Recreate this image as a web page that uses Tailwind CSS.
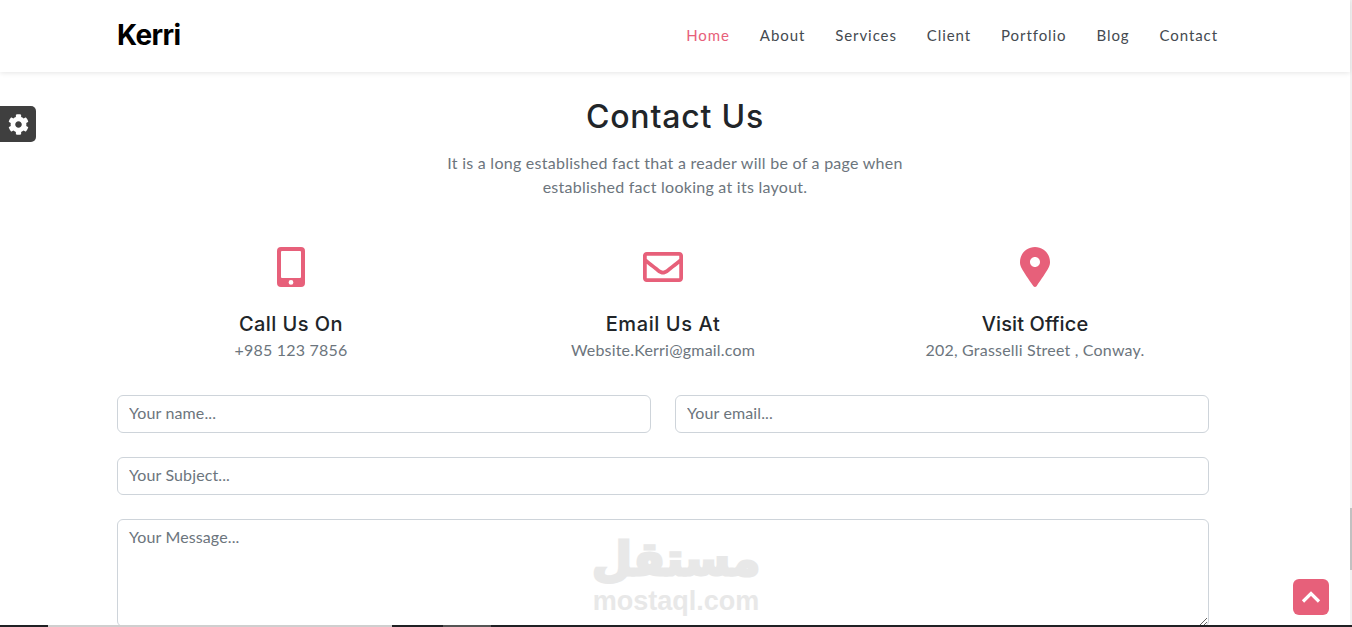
<!DOCTYPE html>
<html lang="en">
<head>
  <meta charset="UTF-8" />
  <title>Kerri - Contact</title>
  <script src="https://cdn.jsdelivr.net/npm/@tailwindcss/browser@4"></script>
</head>
<body class="relative h-[627px] w-[1352px] overflow-hidden bg-white font-['Lato',sans-serif]">

  <!-- navbar -->
  <header class="relative z-10 flex h-[72px] w-[1350px] items-center justify-between bg-white pl-[117px] pr-[132px] shadow-[0_1px_5px_rgba(0,0,0,0.1)]">
    <a class="mb-[2px] font-['Inter',sans-serif] text-[28px] font-bold leading-none tracking-[-0.6px] text-black">Kerri</a>
    <nav class="mb-[1px] flex gap-[30px] text-[15px] leading-none tracking-[0.92px] text-[#444a50]">
      <a class="text-[#e7607a]">Home</a>
      <a>About</a>
      <a>Services</a>
      <a>Client</a>
      <a>Portfolio</a>
      <a>Blog</a>
      <a>Contact</a>
    </nav>
  </header>

  <main class="w-[1350px]">
    <div class="pt-[25px] text-center">
      <h1 class="font-['Inter',sans-serif] text-[32px] font-medium leading-[40px] tracking-[0.8px] text-[#212529]">Contact Us</h1>
      <p class="mt-[14px] text-[16px] leading-[24px] tracking-[0.26px] text-[#6c757d]">It is a long established fact that a reader will be of a page when<br />established fact looking at its layout.</p>
    </div>

    <!-- contact details -->
    <div class="ml-[117px] mt-[48px] grid w-[1092px] grid-cols-3 gap-x-[24px] text-center">
      <div class="flex flex-col items-center">
        <svg class="h-[40px] w-[28px] fill-[#e7607a]" viewBox="0 0 28 40"><path fill-rule="evenodd" d="M4 0h20a4 4 0 0 1 4 4v32a4 4 0 0 1-4 4H4a4 4 0 0 1-4-4V4a4 4 0 0 1 4-4zm1 4a1 1 0 0 0-1 1v25a1 1 0 0 0 1 1h18a1 1 0 0 0 1-1V5a1 1 0 0 0-1-1zm9 29a2.4 2.4 0 1 0 0 4.8 2.4 2.4 0 0 0 0-4.8z"/></svg>
        <h3 class="mt-[24px] font-['Inter',sans-serif] text-[20px] font-medium leading-[26px] tracking-[0.45px] text-[#212529]">Call Us On</h3>
        <p class="mt-[1px] text-[16px] leading-[24px] tracking-[0.2px] text-[#6c757d]">+985 123 7856</p>
      </div>
      <div class="flex flex-col items-center">
        <svg class="h-[40px] w-[40px] fill-[#e7607a]" viewBox="0 0 512 512"><path d="M464 64H48C21.49 64 0 85.49 0 112v288c0 26.51 21.49 48 48 48h416c26.51 0 48-21.49 48-48V112c0-26.51-21.49-48-48-48zm0 48v40.805c-22.422 18.259-58.168 46.651-134.587 106.49-16.841 13.247-50.201 45.072-73.413 44.701-23.208.375-56.579-31.459-73.413-44.701C106.18 199.465 70.425 171.067 48 152.805V112h416zM48 400V214.398c22.914 18.251 55.409 43.862 104.938 82.646 21.857 17.205 60.134 55.186 103.062 54.955 42.717.231 80.509-37.199 103.053-54.947 49.528-38.783 82.032-64.401 104.947-82.653V400H48z"/></svg>
        <h3 class="mt-[24px] font-['Inter',sans-serif] text-[20px] font-medium leading-[26px] tracking-[0.6px] text-[#212529]">Email Us At</h3>
        <p class="mt-[1px] text-[16px] leading-[24px] tracking-[0.2px] text-[#6c757d]">Website.Kerri@gmail.com</p>
      </div>
      <div class="flex flex-col items-center">
        <svg class="h-[40px] w-[30px] fill-[#e7607a]" viewBox="0 0 384 512"><path fill-rule="evenodd" d="M172.268 501.67C26.97 291.031 0 255.327 0 192 0 85.961 85.961 0 192 0s192 85.961 192 192c0 63.327-26.97 99.031-172.268 309.67-9.535 13.774-29.93 13.773-39.464 0zM192 256c35.3 0 64-28.7 64-64s-28.7-64-64-64-64 28.7-64 64 28.7 64 64 64z"/></svg>
        <h3 class="mt-[24px] font-['Inter',sans-serif] text-[20px] font-medium leading-[26px] tracking-[0.1px] text-[#212529]">Visit Office</h3>
        <p class="mt-[1px] text-[16px] leading-[24px] tracking-[0.2px] text-[#6c757d]">202, Grasselli Street , Conway.</p>
      </div>
    </div>

    <!-- form -->
    <form class="ml-[117px] mt-[33px] grid w-[1092px] grid-cols-2 gap-[24px] text-[16px]">
      <input type="text" placeholder="Your name..." class="h-[38px] rounded-[6px] border border-[#ced4da] bg-white pb-[4px] pl-[11px] pr-[12px] tracking-[0.12px] text-[#212529] placeholder:text-[#6c757d]" />
      <input type="text" placeholder="Your email..." class="h-[38px] rounded-[6px] border border-[#ced4da] bg-white pb-[4px] pl-[11px] pr-[12px] tracking-[0.12px] text-[#212529] placeholder:text-[#6c757d]" />
      <input type="text" placeholder="Your Subject..." class="col-span-2 h-[38px] rounded-[6px] border border-[#ced4da] bg-white pb-[4px] pl-[11px] pr-[12px] tracking-[0.12px] text-[#212529] placeholder:text-[#6c757d]" />
      <textarea placeholder="Your Message..." class="col-span-2 h-[108px] rounded-[6px] border border-[#ced4da] bg-white py-[5px] pl-[11px] pr-[12px] leading-[24px] tracking-[0.12px] text-[#212529] placeholder:text-[#6c757d]"></textarea>
    </form>
  </main>

  <!-- settings tab -->
  <button class="absolute left-0 top-[106px] flex h-[36px] w-[36px] items-center justify-center rounded-r-[5px] bg-[#3f3f3f]">
    <svg class="h-[21px] w-[21px] fill-white" viewBox="0 0 512 512"><path d="M487.4 315.7l-42.6-24.6c4.3-23.2 4.3-47 0-70.2l42.6-24.6c4.9-2.8 7.1-8.6 5.5-14-11.1-35.6-30-67.8-54.7-94.6-3.8-4.1-10-5.1-14.8-2.3L380.8 110c-17.9-15.4-38.5-27.3-60.8-35.1V25.8c0-5.6-3.9-10.5-9.4-11.7-36.7-8.2-74.3-7.8-109.2 0-5.5 1.2-9.4 6.1-9.4 11.7V75c-22.2 7.9-42.8 19.8-60.8 35.1L88.7 85.5c-4.9-2.8-11-1.9-14.8 2.3-24.7 26.7-43.6 58.9-54.7 94.6-1.7 5.4.6 11.2 5.5 14L67.3 221c-4.3 23.2-4.3 47 0 70.2l-42.6 24.6c-4.9 2.8-7.1 8.6-5.5 14 11.1 35.6 30 67.8 54.7 94.6 3.8 4.1 10 5.1 14.8 2.3l42.6-24.6c17.9 15.4 38.5 27.3 60.8 35.1v49.2c0 5.6 3.9 10.5 9.4 11.7 36.7 8.2 74.3 7.8 109.2 0 5.5-1.2 9.4-6.1 9.4-11.7v-49.2c22.2-7.9 42.8-19.8 60.8-35.1l42.6 24.6c4.9 2.8 11 1.9 14.8-2.3 24.7-26.7 43.6-58.9 54.7-94.6 1.5-5.5-.7-11.3-5.6-14.1zM256 336c-44.1 0-80-35.9-80-80s35.9-80 80-80 80 35.9 80 80-35.9 80-80 80z"/></svg>
  </button>

  <!-- watermark -->
  <div class="pointer-events-none absolute left-[576px] top-[531px] flex w-[200px] flex-col items-center">
    <span dir="rtl" class="font-['DejaVu_Sans',sans-serif] text-[46px] font-bold leading-[56px] text-[#e8e8e8] [-webkit-text-stroke:3px_#e8e8e8]">مستقل</span>
    <span class="mt-[1px] font-['Liberation_Sans',sans-serif] text-[27px] font-bold leading-[26px] text-[#e8e8e8]">mostaql.com</span>
  </div>

  <!-- back to top -->
  <button class="absolute left-[1293px] top-[579px] flex h-[36px] w-[36px] items-center justify-center rounded-[6px] bg-[#e7607a]">
    <svg class="h-[14px] w-[20px] fill-none stroke-white stroke-[3.2]" viewBox="0 0 20 14"><path d="M2 11.5 10 3.5l8 8" /></svg>
  </button>

  <!-- scrollbar -->
  <div class="absolute right-0 top-0 h-full w-[2px] bg-[#f1f1f1]">
    <div class="mt-[508px] h-[62px] w-full bg-[#c1c1c1]"></div>
  </div>

  <!-- window edge -->
  <div class="absolute bottom-0 left-0 flex h-[2px] w-full bg-[#202124]">
    <div class="w-[48px]"></div>
    <div class="w-[344px] bg-[#cfcfcf]"></div>
    <div class="w-[51px]"></div>
    <div class="w-[48px] bg-[#555555]"></div>
  </div>
</body>
</html>
